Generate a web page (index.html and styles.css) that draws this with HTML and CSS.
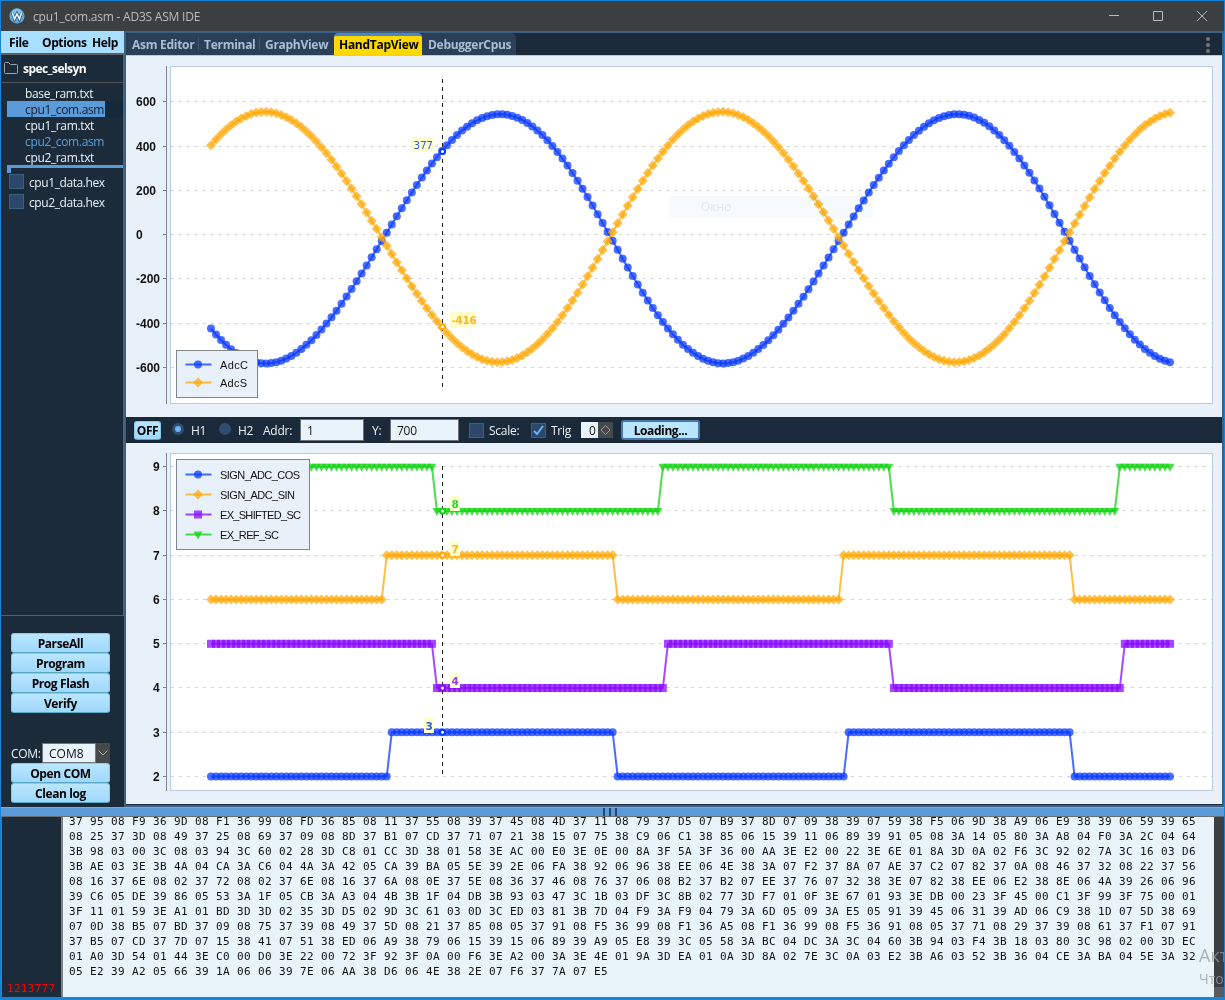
FILE: index.html
```html
<!DOCTYPE html>
<html lang="en">
<head>
  <meta charset="UTF-8">
  <title>cpu1_com.asm - AD3S ASM IDE</title>
  <link rel="stylesheet" href="styles.css">
</head>
<body>
  <div class="window">
    <header class="titlebar">
      <svg class="logo" width="16" height="16" viewBox="0 0 16 16">
        <circle cx="8" cy="8" r="7.6" fill="#5fa9dd"/>
        <circle cx="8" cy="5.5" r="5" fill="#86c3ea"/>
        <path d="M3.500 5L5.600 11L8 6L10.400 11L12.500 5" fill="none" stroke="#1f5a8c" stroke-width="3"/>
        <path d="M3.500 5L5.600 11L8 6L10.400 11L12.500 5" fill="none" stroke="#fff" stroke-width="1.5"/>
      </svg>
      <span class="title">cpu1_com.asm - AD3S ASM IDE</span>
      <svg class="controls" width="110" height="30" viewBox="0 0 110 30">
        <path d="M1 14.500H11M45.500 10.500H54.500V19.500H45.500ZM89 10L99 20M99 10L89 20" fill="none" stroke="#bbb"/>
      </svg>
    </header>

    <div class="main">
      <aside class="sidebar">
        <nav class="menu"><span>File</span><span>Options</span><span>Help</span></nav>
        <div class="project">
          <div class="folder">
            <svg width="14" height="13" viewBox="0 0 14 13"><path d="M.5 10.500V1.500Q.5.5 1.500.5H4.500L6.500 2.500H12.500Q13.500 2.500 13.500 3.500V10.500Q13.500 11.500 12.500 11.500H1.500Q.5 11.500.5 10.500Z" fill="none" stroke="#9aa3ab"/></svg>
            <b>spec_selsyn</b>
          </div>
          <ul class="files">
            <li>base_ram.txt</li>
            <li class="selected"><span>cpu1_com.asm</span></li>
            <li>cpu1_ram.txt</li>
            <li class="linked">cpu2_com.asm</li>
            <li>cpu2_ram.txt</li>
          </ul>
          <div class="splitter"></div>
          <label class="hex"><i class="check"></i>cpu1_data.hex</label>
          <label class="hex"><i class="check"></i>cpu2_data.hex</label>
        </div>
        <div class="actions">
          <button>ParseAll</button>
          <button>Program</button>
          <button>Prog Flash</button>
          <button>Verify</button>
        </div>
        <div class="actions com">
          <div class="port">
            <span class="port-label">COM:</span>
            <span class="port-value">COM8</span>
            <span class="port-arrow"><svg width="10" height="6" viewBox="0 0 10 6"><path d="M.5.5L5 5L9.500.5" fill="none" stroke="#aaa"/></svg></span>
          </div>
          <button>Open COM</button>
          <button>Clean log</button>
        </div>
      </aside>

      <section class="content">
        <div class="tabs">
          <span class="tab">Asm Editor</span>
          <span class="tab">Terminal</span>
          <span class="tab">GraphView</span>
          <span class="tab active">HandTapView</span>
          <span class="tab last">DebuggerCpus</span>
          <span class="dots"><i></i><i></i><i></i></span>
        </div>
        <div class="chart-box">
          <svg id="adc" class="chart" width="1096" height="361"></svg>
          <div class="ghost">Окно</div>
        </div>
        <div class="toolbar">
          <button class="off">OFF</button>
          <i class="radio on"></i><span class="h1">H1</span>
          <i class="radio"></i><span class="h2">H2</span>
          <span class="addr">Addr:</span><span class="field addr-field">1</span>
          <span class="y">Y:</span><span class="field y-field">700</span>
          <i class="check"></i><span class="scale">Scale:</span>
          <i class="check"><svg width="11" height="11" viewBox="0 0 11 11"><path d="M1 6L4 9L10 1" fill="none" stroke="#6cb3f5" stroke-width="2"/></svg></i><span class="trig">Trig</span>
          <span class="spin"><span>0</span><svg width="15" height="16" viewBox="0 0 15 16"><path d="M3 8L7.500 3.500L12 8L7.500 12.500Z" fill="none" stroke="#999"/></svg></span>
          <button class="loading">Loading...</button>
        </div>
        <div class="chart-box">
          <svg id="signs" class="chart" width="1096" height="361"></svg>
        </div>
      </section>
    </div>

    <div class="divider"><i></i><i></i><i></i></div>

    <div class="log">
      <div class="gutter">1213777</div>
      <pre class="dump">37 95 08 F9 36 9D 08 F1 36 99 08 FD 36 85 08 11 37 55 08 39 37 45 08 4D 37 11 08 79 37 D5 07 B9 37 8D 07 09 38 39 07 59 38 F5 06 9D 38 A9 06 E9 38 39 06 59 39 65
08 25 37 3D 08 49 37 25 08 69 37 09 08 8D 37 B1 07 CD 37 71 07 21 38 15 07 75 38 C9 06 C1 38 85 06 15 39 11 06 89 39 91 05 08 3A 14 05 80 3A A8 04 F0 3A 2C 04 64
3B 98 03 00 3C 08 03 94 3C 60 02 28 3D C8 01 CC 3D 38 01 58 3E AC 00 E0 3E 0E 00 8A 3F 5A 3F 36 00 AA 3E E2 00 22 3E 6E 01 8A 3D 0A 02 F6 3C 92 02 7A 3C 16 03 D6
3B AE 03 3E 3B 4A 04 CA 3A C6 04 4A 3A 42 05 CA 39 BA 05 5E 39 2E 06 FA 38 92 06 96 38 EE 06 4E 38 3A 07 F2 37 8A 07 AE 37 C2 07 82 37 0A 08 46 37 32 08 22 37 56
08 16 37 6E 08 02 37 72 08 02 37 6E 08 16 37 6A 08 0E 37 5E 08 36 37 46 08 76 37 06 08 B2 37 B2 07 EE 37 76 07 32 38 3E 07 82 38 EE 06 E2 38 8E 06 4A 39 26 06 96
39 C6 05 DE 39 86 05 53 3A 1F 05 CB 3A A3 04 4B 3B 1F 04 DB 3B 93 03 47 3C 1B 03 DF 3C 8B 02 77 3D F7 01 0F 3E 67 01 93 3E DB 00 23 3F 45 00 C1 3F 99 3F 75 00 01
3F 11 01 59 3E A1 01 BD 3D 3D 02 35 3D D5 02 9D 3C 61 03 0D 3C ED 03 81 3B 7D 04 F9 3A F9 04 79 3A 6D 05 09 3A E5 05 91 39 45 06 31 39 AD 06 C9 38 1D 07 5D 38 69
07 0D 38 B5 07 BD 37 09 08 75 37 39 08 49 37 5D 08 21 37 85 08 05 37 91 08 F5 36 99 08 F1 36 A5 08 F1 36 99 08 F5 36 91 08 05 37 71 08 29 37 39 08 61 37 F1 07 91
37 B5 07 CD 37 7D 07 15 38 41 07 51 38 ED 06 A9 38 79 06 15 39 15 06 89 39 A9 05 E8 39 3C 05 58 3A BC 04 DC 3A 3C 04 60 3B 94 03 F4 3B 18 03 80 3C 98 02 00 3D EC
01 A0 3D 54 01 44 3E C0 00 D0 3E 22 00 72 3F 92 3F 0A 00 F6 3E A2 00 3A 3E 4E 01 9A 3D EA 01 0A 3D 8A 02 7E 3C 0A 03 E2 3B A6 03 52 3B 36 04 CE 3A BA 04 5E 3A 32
05 E2 39 A2 05 66 39 1A 06 06 39 7E 06 AA 38 D6 06 4E 38 2E 07 F6 37 7A 07 E5</pre>
      <div class="scrollbar"><i></i></div>
    </div>
    <div class="activate"><div>Акт</div><small>Что</small></div>
  </div>

  <script>
    const COUNT = 192;
    const STEP = 959 / 191;
    const LEFT = 85;

    const markers = {
      circle: (x, y) => `<circle cx="${x}" cy="${y}" r="4"/>`,
      diamond: (x, y) => `<path d="M${x - 5} ${y}l5 -5l5 5l-5 5z"/>`,
      square: (x, y) => `<rect x="${x - 4}" y="${y - 4}" width="8" height="8"/>`,
      triangle: (x, y) => `<path d="M${x - 4.5} ${y - 3}h9l-4.5 8z"/>`
    };

    // Sine wave with a little second harmonic, sampled at every point
    function wave(mid, amp, zero, skew) {
      return Array.from({ length: COUNT }, (_, i) => {
        const a = 2 * Math.PI * (LEFT + i * STEP - zero) / 457;
        return mid + amp * (Math.sin(a) + skew * Math.sin(2 * a));
      });
    }

    // Two level signal that toggles at the given indexes
    function toggle(first, second, flips) {
      return Array.from({ length: COUNT }, (_, i) =>
        flips.filter(f => i >= f).length % 2 ? second : first);
    }

    function drawChart(id, chart) {
      const y = v => +(chart.zero - v * chart.unit).toFixed(2);
      let out = '<rect class="plot" x="44.5" y="10.5" width="1042" height="337"/>';
      out += '<path class="axis" d="M40.5 10V348"/>';

      chart.ticks.forEach(t => {
        const ty = Math.floor(y(t) - 0.2) + 0.5;
        out += `<path class="axis" d="M37 ${ty}h4"/><path class="grid" d="M45 ${ty}H1086"/>`;
        out += `<text class="tick" x="${chart.tickX}" y="${ty + 4.5}">${t}</text>`;
      });

      chart.series.forEach(s => {
        const pts = s.data.map((v, i) => [+(LEFT + i * STEP).toFixed(2), y(v)]);
        out += `<polyline class="line" stroke="${s.color}" points="${pts.join(' ')}"/>`;
        out += `<g fill="${s.color}">${pts.map(p => markers[s.marker](p[0], p[1])).join('')}</g>`;
      });

      out += `<path class="cursor" d="M316.5 ${chart.cursor[0]}V${chart.cursor[1]}"/>`;
      chart.labels.forEach(l => {
        out += `<circle class="hit" cx="316.5" cy="${y(l.value)}" r="2.5" stroke="${l.dot}"/>`;
        out += `<rect class="tip" x="${l.x}" y="${l.y}" width="${l.w}" height="15"/>`;
        out += `<text class="tip-text" fill="${l.color}" font-weight="${l.weight || 400}" x="${l.x + 1.5}" y="${l.y + 12}">${l.value}</text>`;
      });

      const g = chart.legend;
      out += `<rect class="legend" x="50.5" y="${g.y}" width="${g.w}" height="${g.h}"/>`;
      chart.series.forEach((s, i) => {
        const ly = g.y + g.first + i * g.gap;
        out += `<path class="line" stroke="${s.color}" d="M59.500 ${ly}h26"/>`;
        out += `<g fill="${s.color}">${markers[s.marker](72, ly)}</g>`;
        out += `<text class="legend-text" x="94" y="${ly + 4.5}" textLength="${s.width}">${s.name}</text>`;
      });
      document.getElementById(id).innerHTML = out;
    }

    drawChart('adc', {
      zero: 178.8, unit: 0.2212, tickX: 10,
      ticks: [600, 400, 200, 0, -200, -400, -600],
      cursor: [23, 331],
      series: [
        { name: 'AdcC', width: 28, color: '#0b3bff', marker: 'circle', data: wave(-18, 563, 257, -0.02) },
        { name: 'AdcS', width: 27, color: '#ffa90a', marker: 'diamond', data: wave(-10, 566, 27, 0.017) }
      ],
      labels: [
        { value: 377, x: 286, y: 81, w: 22, color: '#2d5be8', dot: '#0b3bff' },
        { value: -416, x: 324, y: 256, w: 26, color: '#fdb52a', dot: '#ffa90a', weight: 700 }
      ],
      legend: { y: 294.5, w: 81, h: 47, first: 14, gap: 18 }
    });

    drawChart('signs', {
      zero: 422, unit: 44.24, tickX: 27,
      ticks: [9, 8, 7, 6, 5, 4, 3, 2],
      cursor: [23, 334],
      series: [
        { name: 'SIGN_ADC_COS', width: 80, color: '#0b3bff', marker: 'circle', data: toggle(2, 3, [36, 81, 127, 172]) },
        { name: 'SIGN_ADC_SIN', width: 75, color: '#ffa90a', marker: 'diamond', data: toggle(6, 7, [35, 81, 126, 172]) },
        { name: 'EX_SHIFTED_SC', width: 81, color: '#8a0bff', marker: 'square', data: toggle(5, 4, [45, 91, 136, 182]) },
        { name: 'EX_REF_SC', width: 59, color: '#12d312', marker: 'triangle', data: toggle(9, 8, [45, 90, 136, 181]) }
      ],
      labels: [
        { value: 8, x: 324, y: 53, w: 10, color: '#35d035', dot: '#12d312', weight: 700 },
        { value: 7, x: 324, y: 98, w: 10, color: '#fdb52a', dot: '#ffa90a', weight: 700 },
        { value: 4, x: 324, y: 230, w: 10, color: '#9a3df0', dot: '#8a0bff', weight: 700 },
        { value: 3, x: 298, y: 275, w: 10, color: '#2d5be8', dot: '#0b3bff', weight: 700 }
      ],
      legend: { y: 16.5, w: 133, h: 90, first: 15, gap: 20 }
    });
  </script>
</body>
</html>
```
FILE: styles.css
```css
* {
  box-sizing: border-box;
}

body {
  margin: 0;
  font-family: "Open Sans", "Noto Sans", sans-serif;
  font-size: 12px;
  color: #e8f2f8;
  background: #1c2b3a;
}

.window {
  position: relative;
  width: 1225px;
  height: 1000px;
  border: 1px solid #1883d7;
  border-bottom-width: 2px;
  display: flex;
  flex-direction: column;
  overflow: hidden;
}

.titlebar {
  height: 30px;
  flex: none;
  display: flex;
  align-items: center;
  padding: 0 11px 0 8px;
  background: #3c3f41;
  color: #bbb;
}

.title {
  margin-left: 8px;
  letter-spacing: -0.22px;
}

.controls {
  margin-left: auto;
  margin-right: -5px;
}

.main {
  display: flex;
  height: 776px;
  flex: none;
}

/* sidebar */
.sidebar {
  width: 123px;
  flex: none;
  display: flex;
  flex-direction: column;
  background: #1c2b3a;
}

.menu {
  height: 22px;
  display: flex;
  padding-left: 8px;
  line-height: 23px;
  font-weight: 700;
  letter-spacing: -0.4px;
  color: #000;
  background: #a8deff;
}

.menu span:nth-child(1) { width: 33px; }
.menu span:nth-child(2) { width: 50px; }

.project {
  height: 563px;
  border: 1px solid #5c6064;
  border-left: none;
  border-top-width: 2px;
}

.folder {
  height: 28px;
  margin-left: 1px;
  padding-left: 2px;
  display: flex;
  align-items: center;
  gap: 5px;
  border-bottom: 1px solid #555;
  color: #fff;
  letter-spacing: -0.55px;
}

.files {
  list-style: none;
  margin: 0;
  padding: 2px 0 0;
  line-height: 17px;
  letter-spacing: -0.35px;
}

.files li {
  height: 16px;
  padding-left: 24px;
}

.files .selected {
  margin-left: 6px;
  padding: 0;
  background: #14293a;
  color: #101c2a;
}

.files .selected span {
  display: block;
  width: 98px;
  height: 16px;
  padding-left: 18px;
  background: #5c9bd9;
}

.files .linked {
  color: #5aa0e0;
}

.splitter {
  height: 7px;
  margin-left: 6px;
  border-top: 3px solid #5c9bd9;
}

.splitter::before {
  content: "";
  display: block;
  width: 4px;
  height: 5px;
  background: #5c9bd9;
}

.hex {
  display: flex;
  align-items: center;
  height: 20px;
  padding-left: 8px;
  gap: 5px;
  letter-spacing: -0.42px;
}

.hex .check {
  margin-top: -2px;
}

.check {
  width: 15px;
  height: 15px;
  border: 1px solid #3b5f86;
  background: #2b4769;
  display: flex;
  align-items: center;
  justify-content: center;
}

.actions {
  display: flex;
  flex-direction: column;
  padding: 17px 14px 0 10px;
}

.actions.com {
  padding-top: 30px;
}

button {
  height: 20px;
  padding: 0;
  border: 1px solid #8cc9ea;
  border-bottom-color: #58a9c8;
  border-radius: 3px;
  background: linear-gradient(#b9e6ff, #9fd8fb);
  font: 700 12px/18px "Open Sans", sans-serif;
  letter-spacing: -0.4px;
  color: #000;
}

.actions button {
  padding-top: 1px;
}

.port {
  display: flex;
  height: 20px;
  line-height: 21px;
}

.port-label {
  width: 31px;
  letter-spacing: -0.3px;
}

.port-value {
  width: 54px;
  height: 20px;
  padding-left: 6px;
  border: 1px solid #777;
  line-height: 20px;
  color: #111;
  background: #e8f4f9;
}

.port-arrow {
  width: 14px;
  height: 20px;
  display: flex;
  align-items: center;
  justify-content: center;
  background: #46494b;
}

/* tabs and charts */
.content {
  width: 1100px;
  flex: none;
  border: 2px solid #3d6185;
}

.tabs {
  display: flex;
  height: 23px;
  border-bottom: 1px solid #f2d21a;
  background: #1b2a3a;
}

.tab {
  position: relative;
  padding: 0 6px;
  line-height: 24px;
  font-weight: 700;
  letter-spacing: -0.28px;
  white-space: nowrap;
  color: #a9bfd6;
  background: #2b3f57;
}

.tab:nth-child(1) { width: 72px; border-radius: 4px 0 0 0; }
.tab:nth-child(2) { width: 61px; }
.tab:nth-child(3) { width: 75px; }

.tab:nth-child(2)::before,
.tab:nth-child(3)::before {
  content: "";
  position: absolute;
  left: 0;
  top: 5px;
  width: 1px;
  height: 12px;
  background: #3d5878;
}

.tab.active {
  width: 88px;
  padding-left: 5px;
  border-top: 3px solid #4d86c6;
  border-radius: 4px 4px 0 0;
  line-height: 18px;
  color: #000;
  background: #ffd800;
}

.tab.last {
  width: 94px;
  border-radius: 0 5px 0 0;
}

.dots {
  margin: 4px 12px 0 auto;
}

.dots i {
  display: block;
  width: 4px;
  height: 4px;
  margin-bottom: 2px;
  border-radius: 50%;
  background: #777;
}

.chart-box {
  position: relative;
  height: 361px;
  background: #e8f0fa;
}

.chart {
  display: block;
}

.plot { fill: #fff; stroke: #b9cbde; }
.axis { stroke: #808488; fill: none; }
.grid { stroke: #d4d4d4; stroke-dasharray: 3 5; }
.line { fill: none; stroke-width: 2; stroke-opacity: 0.75; }
.chart g { fill-opacity: 0.75; }
.cursor { stroke: #222; stroke-dasharray: 4 4; }
.hit { fill: #fff; stroke-width: 2; }
.tip { fill: #ffffcc; }

.tick {
  font: 700 12px "Liberation Sans", sans-serif;
  fill: #111;
}

.tip-text {
  font-family: "DejaVu Sans", sans-serif;
  font-size: 10.5px;
  letter-spacing: -0.3px;
}

.legend {
  fill: #e8f0fa;
  stroke: #80858a;
}

.legend-text {
  font: 11px "Liberation Sans", sans-serif;
  fill: #111;
}

/* leftover of a fading tooltip */
.ghost {
  position: absolute;
  left: 543px;
  top: 140px;
  width: 204px;
  height: 22px;
  padding-left: 32px;
  line-height: 22px;
  color: #e3e8ec;
  background: #f6fafd;
  mix-blend-mode: multiply;
}

.toolbar {
  display: flex;
  align-items: center;
  height: 26px;
  padding-left: 8px;
  background: #1b2a3a;
  letter-spacing: -0.25px;
}

.off {
  width: 27px;
  height: 19px;
}

.radio {
  width: 12px;
  height: 12px;
  margin: -2px 7px 0 11px;
  border: 3px solid #304d70;
  border-radius: 50%;
  background: #304d70;
}

.radio.on {
  background: #6cb3f5;
}

.h1 { width: 17px; }
.h2 { width: 25px; }
.addr { width: 37px; }
.y { width: 18px; margin-left: 8px; }
.scale { width: 42px; margin-left: 5px; }
.trig { width: 30px; margin-left: 5px; }

.field {
  height: 22px;
  padding-left: 6px;
  border: 1px solid #6b7075;
  line-height: 21px;
  color: #111;
  background: #e8f4f9;
}

.addr-field { width: 64px; }
.y-field { width: 69px; margin-right: 10px; }

.spin {
  display: flex;
  width: 32px;
  height: 16px;
  background: #46494b;
}

.spin span {
  width: 17px;
  padding-left: 8px;
  line-height: 17px;
  color: #111;
  background: #e8f4f9;
}

.loading {
  width: 79px;
  height: 20px;
  margin-left: 8px;
  border: 2px solid #4a78ac;
  line-height: 17px;
  background: #b9e6ff;
}

/* bottom area */
.divider {
  height: 10px;
  flex: none;
  display: flex;
  justify-content: center;
  gap: 4px;
  padding-right: 5px;
  border-top: 1px solid #6cb0ee;
  border-bottom: 1px solid #6b6f72;
  background: #5c9bd9;
}

.divider i {
  width: 2px;
  background: #26486e;
}

.log {
  display: flex;
  flex: 1;
  min-height: 0;
  border-left: 1px solid #6b6f72;
  border-bottom: 1px solid #6b6f72;
  font-family: "DejaVu Sans Mono", monospace;
}

.gutter {
  width: 61px;
  flex: none;
  display: flex;
  align-items: flex-end;
  padding: 0 0 2px 5px;
  border-right: 2px solid #808080;
  font-size: 11px;
  letter-spacing: 0.3px;
  color: #f00;
  background: #1c2b3a;
}

/* scrolled to the end, the first row is partly hidden */
.dump {
  flex: 1;
  margin: 0;
  padding-left: 6px;
  font: 11px/15px "DejaVu Sans Mono", monospace;
  letter-spacing: 0.378px;
  color: #111;
  background: #e8f4f9;
  overflow: hidden;
}

.dump::before {
  content: "";
  display: block;
  margin-top: -3px;
}

.scrollbar {
  width: 10px;
  display: flex;
  align-items: flex-end;
  background: #3c3f41;
}

.scrollbar i {
  width: 10px;
  height: 10px;
  background: #595c5e;
}

.activate {
  position: absolute;
  left: 1198px;
  top: 943px;
  width: 26px;
  overflow: hidden;
  font-size: 18px;
  line-height: 22px;
  white-space: nowrap;
  color: rgba(150, 155, 160, 0.75);
}

.activate small {
  font-size: 14px;
}
```
